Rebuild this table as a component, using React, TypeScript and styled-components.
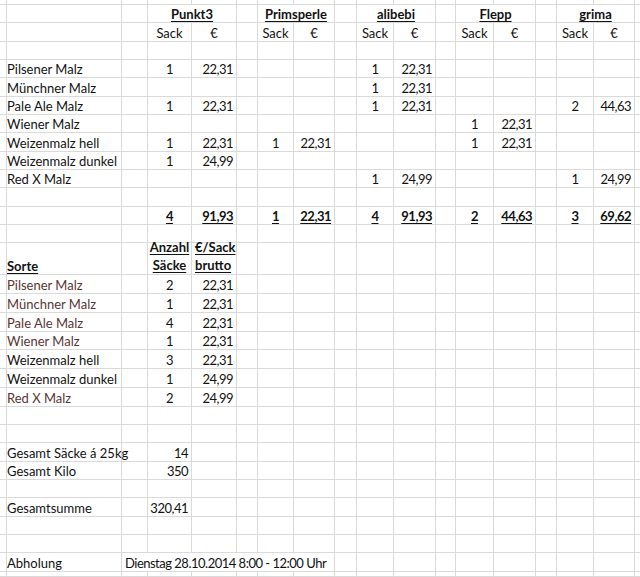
import styled, { createGlobalStyle } from "styled-components"

const GlobalStyle = createGlobalStyle`
  html, body {
    margin: 0;
    padding: 0;
    background: #ffffff;
    overflow: hidden;
  }
`

// widths / heights of the visible columns and rows (px), first and last are cut off
const COLS = [4, 118, 26, 44, 45, 21, 36, 41, 22, 37, 42, 20, 38, 42, 21, 37, 41, 5]
const ROWS = [5, 18, 19, 18, 18, 19, 18, 18, 19, 18, 18, 19, 18, 18, 32, 19, 19, 19, 18, 19, 19, 19, 18, 18, 19, 18, 18, 19, 18, 18, 19, 5]

type Align = "left" | "center" | "right"

type CellData = {
  text: React.ReactNode
  align?: Align
  bold?: boolean
  underline?: boolean
  color?: string
  span?: number
  num?: boolean
  tall?: boolean
}

const Sheet = styled.div`
  display: grid;
  grid-template-columns: ${COLS.map((w) => `${w}px`).join(" ")};
  grid-template-rows: ${ROWS.map((h) => `${h}px`).join(" ")};
  width: 640px;
  height: 577px;
  font-family: Lato, "Liberation Sans", sans-serif;
  font-size: 13px;
  color: #121212;
`

const Cell = styled.div<{
  $align: Align
  $bold?: boolean
  $underline?: boolean
  $color?: string
  $span?: number
  $num?: boolean
  $tall?: boolean
}>`
  box-sizing: border-box;
  display: flex;
  align-items: flex-end;
  justify-content: ${(p) => (p.$align === "left" ? "flex-start" : p.$align === "right" ? "flex-end" : "center")};
  text-align: ${(p) => p.$align};
  grid-column: span ${(p) => p.$span ?? 1};
  padding: 0 3px 0 3px;
  border-right: 1px solid #dadada;
  border-bottom: 1px solid #dadada;
  line-height: ${(p) => (p.$tall ? "18px" : "16px")};
  letter-spacing: ${(p) => (p.$num ? "-0.5px" : "normal")};
  white-space: nowrap;
  font-weight: ${(p) => (p.$bold ? 700 : 400)};
  text-decoration: ${(p) => (p.$underline ? "underline" : "none")};
  text-underline-offset: 2px;
  color: ${(p) => p.$color ?? "inherit"};
`

const BROWN = "#5b3535"

const vendors = [
  { name: "Punkt3", col: 3, total: ["4", "91,93"] },
  { name: "Primsperle", col: 6, total: ["1", "22,31"] },
  { name: "alibebi", col: 9, total: ["4", "91,93"] },
  { name: "Flepp", col: 12, total: ["2", "44,63"] },
  { name: "grima", col: 15, total: ["3", "69,62"] },
]

// orders per malt: [vendor column, sacks, euro]
const orders: { name: string; items: [number, string, string][] }[] = [
  { name: "Pilsener Malz", items: [[3, "1", "22,31"], [9, "1", "22,31"]] },
  { name: "Münchner Malz", items: [[9, "1", "22,31"]] },
  { name: "Pale Ale Malz", items: [[3, "1", "22,31"], [9, "1", "22,31"], [15, "2", "44,63"]] },
  { name: "Wiener Malz", items: [[12, "1", "22,31"]] },
  { name: "Weizenmalz hell", items: [[3, "1", "22,31"], [6, "1", "22,31"], [12, "1", "22,31"]] },
  { name: "Weizenmalz dunkel", items: [[3, "1", "24,99"]] },
  { name: "Red X Malz", items: [[9, "1", "24,99"], [15, "1", "24,99"]] },
]

const summary = [
  { name: "Pilsener Malz", count: "2", price: "22,31", brown: true },
  { name: "Münchner Malz", count: "1", price: "22,31", brown: true },
  { name: "Pale Ale Malz", count: "4", price: "22,31", brown: true },
  { name: "Wiener Malz", count: "1", price: "22,31", brown: true },
  { name: "Weizenmalz hell", count: "3", price: "22,31", brown: false },
  { name: "Weizenmalz dunkel", count: "1", price: "24,99", brown: false },
  { name: "Red X Malz", count: "2", price: "24,99", brown: true },
]

function buildCells() {
  const cells = new Map<string, CellData>()
  const put = (r: number, c: number, d: CellData) => cells.set(`${r}-${c}`, d)

  vendors.forEach((v) => {
    put(1, v.col, { text: v.name, bold: true, underline: true, align: "center", span: 2 })
    put(2, v.col, { text: "Sack", align: "center" })
    put(2, v.col + 1, { text: "€", align: "center" })
    put(12, v.col, { text: v.total[0], bold: true, underline: true, align: "center", num: true })
    put(12, v.col + 1, { text: v.total[1], bold: true, underline: true, align: "right", num: true })
  })

  orders.forEach((o, i) => {
    put(4 + i, 1, { text: o.name })
    o.items.forEach(([col, sack, euro]) => {
      put(4 + i, col, { text: sack, align: "center", num: true })
      put(4 + i, col + 1, { text: euro, align: "right", num: true })
    })
  })

  put(14, 1, { text: "Sorte", bold: true, underline: true })
  put(14, 3, { text: <>Anzahl<br />Säcke</>, bold: true, underline: true, align: "center", tall: true })
  put(14, 4, { text: <>€/Sack<br />brutto</>, bold: true, underline: true, align: "left", tall: true })

  summary.forEach((s, i) => {
    const color = s.brown ? BROWN : undefined
    put(15 + i, 1, { text: s.name, color })
    put(15 + i, 3, { text: s.count, align: "center", num: true })
    put(15 + i, 4, { text: s.price, align: "right", num: true })
  })

  put(24, 1, { text: "Gesamt Säcke á 25kg" })
  put(24, 3, { text: "14", align: "right", num: true })
  put(25, 1, { text: "Gesamt Kilo" })
  put(25, 3, { text: "350", align: "right", num: true })
  put(27, 1, { text: "Gesamtsumme" })
  put(27, 3, { text: "320,41", align: "right", num: true })
  put(30, 1, { text: "Abholung" })
  put(30, 2, { text: "Dienstag 28.10.2014 8:00 - 12:00 Uhr", span: 6, num: true })

  return cells
}

export default function App() {
  const cells = buildCells()
  const out: React.ReactNode[] = []

  ROWS.forEach((_, r) => {
    let c = 0
    while (c < COLS.length) {
      const d = cells.get(`${r}-${c}`)
      const span = d?.span ?? 1
      out.push(
        <Cell
          key={`${r}-${c}`}
          $align={d?.align ?? "left"}
          $bold={d?.bold}
          $underline={d?.underline}
          $color={d?.color}
          $span={span}
          $num={d?.num}
          $tall={d?.tall}
        >
          {d && <span>{d.text}</span>}
        </Cell>
      )
      c += span
    }
  })

  return (
    <>
      <GlobalStyle />
      <Sheet>{out}</Sheet>
    </>
  )
}
